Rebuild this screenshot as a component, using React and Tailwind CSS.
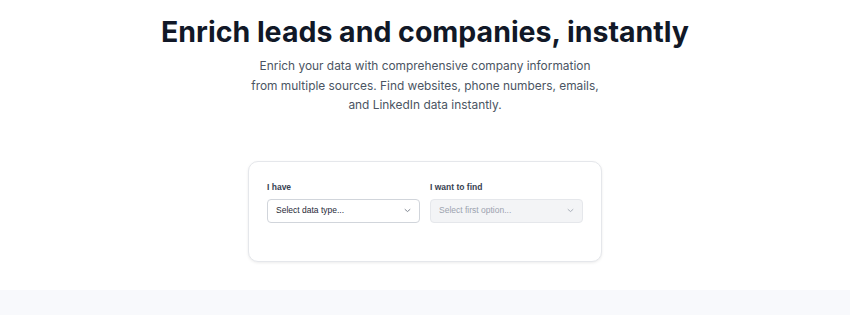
import React from 'react';

function Chevron({ className }) {
  return (
    <svg viewBox="0 0 10 6" className={className} fill="none" stroke="currentColor" strokeWidth="1.2" strokeLinecap="round" strokeLinejoin="round">
      <path d="M1.5 1.5 L5 4.5 L8.5 1.5" />
    </svg>
  );
}

export default function App() {
  return (
    <div className="min-h-screen bg-white font-['Inter',sans-serif]">
      <section className="flex flex-col items-center pt-[15px] pb-[28px]">
        <h1 className="text-[28.5px] leading-[34px] font-bold text-[#111827]">
          Enrich leads and companies, instantly
        </h1>
        <p className="mt-[7px] w-[356px] text-center text-[11.9px] leading-[19.5px] text-[#4b5563]">
          Enrich your data with comprehensive company information from multiple sources. Find websites, phone numbers, emails, and LinkedIn data instantly.
        </p>

        <div className="mt-[46px] w-[354px] h-[101px] rounded-[10px] border border-[#e5e7eb] bg-white shadow-[0_1px_3px_rgba(0,0,0,0.08)] px-[18px] pt-[19px] font-['Liberation_Sans',Arial,sans-serif]">
          <div className="grid grid-cols-2 gap-[10px]">
            <div>
              <label className="block text-[8.5px] leading-[12px] font-bold text-[#374151] mb-[6px]">I have</label>
              <button className="w-full h-[24px] flex items-center justify-between rounded-[4px] border border-[#d1d5db] bg-white px-[8px] text-[8.5px] text-[#1f2937]">
                <span>Select data type...</span>
                <Chevron className="w-[7px] h-[5px] text-[#6b7280]" />
              </button>
            </div>
            <div>
              <label className="block text-[8.5px] leading-[12px] font-bold text-[#374151] mb-[6px]">I want to find</label>
              <button className="w-full h-[24px] flex items-center justify-between rounded-[4px] border border-[#e5e7eb] bg-[#f3f4f6] px-[8px] text-[8.5px] text-[#9ca3af]">
                <span>Select first option...</span>
                <Chevron className="w-[7px] h-[5px] text-[#9ca3af]" />
              </button>
            </div>
          </div>
        </div>
      </section>
      <section className="h-[200px] bg-[#f8f9fc]"></section>
    </div>
  );
}
